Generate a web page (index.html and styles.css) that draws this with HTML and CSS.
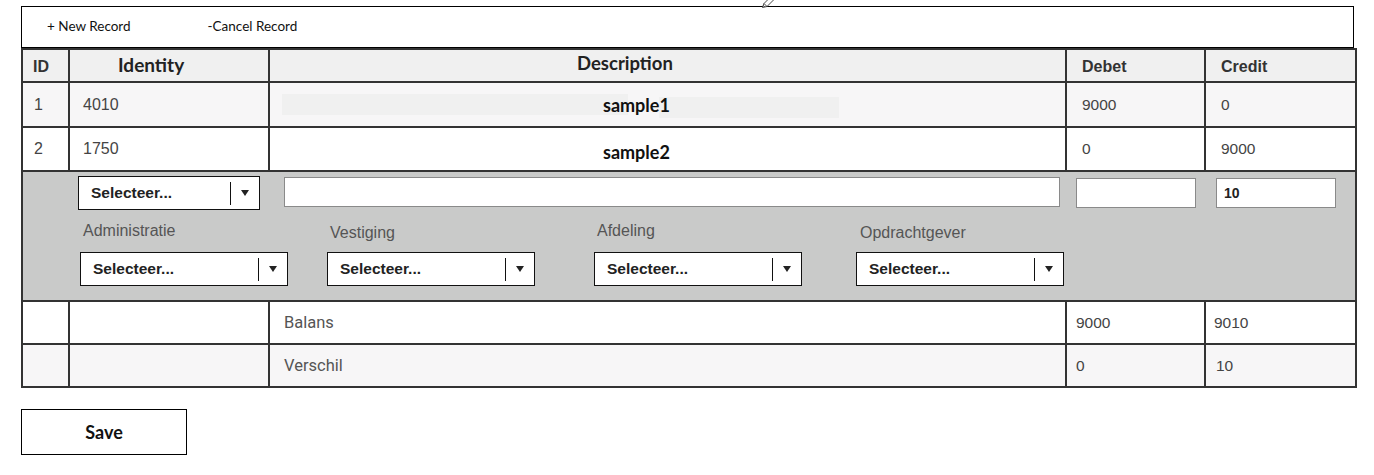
FILE: index.html
```html
<!DOCTYPE html>
<html>
<head>
<meta charset="utf-8">
<title>Records</title>
<link rel="stylesheet" href="styles.css">
</head>
<body>
<div class="page">
  <svg class="pencil" width="18" height="8" viewBox="0 0 18 8"><path d="M1.5 7.5 L3 3.5 L10 -3.5 L13 -0.5 L6 6.5 Z M3 3.5 L6 6.5 M2.3 5.5 L3.8 7" fill="#fff" stroke="#333" stroke-width="0.9"/></svg>
  <div class="toolbar">
    <span class="tool">+ New Record</span>
    <span class="tool cancel">-Cancel Record</span>
  </div>
  <table class="grid">
    <colgroup>
      <col class="c-id"><col class="c-ident"><col class="c-desc"><col class="c-debet"><col class="c-credit">
    </colgroup>
    <thead>
      <tr class="head">
        <th class="h-id">ID</th>
        <th class="h-ident">Identity</th>
        <th class="h-desc">Description</th>
        <th class="h-num">Debet</th>
        <th class="h-num">Credit</th>
      </tr>
    </thead>
    <tbody>
      <tr class="row r1 alt">
        <td class="id">1</td>
        <td class="ident">4010</td>
        <td class="desc"><span class="ghost g1"></span><span class="ghost g2"></span><span class="sample">sample1</span></td>
        <td class="num">9000</td>
        <td class="num">0</td>
      </tr>
      <tr class="row r2">
        <td class="id">2</td>
        <td class="ident">1750</td>
        <td class="desc"><span class="sample s2">sample2</span></td>
        <td class="num">0</td>
        <td class="num">9000</td>
      </tr>
      <tr class="editor">
        <td colspan="5">
          <div class="edit-line">
            <div class="select sel-main"><span class="sel-text">Selecteer...</span><span class="sel-sep"></span><span class="sel-arrow"></span></div>
            <div class="input in-desc"></div>
            <div class="input in-debet"></div>
            <div class="input in-credit">10</div>
          </div>
          <div class="dims">
            <div class="dim d1">
              <div class="dim-label">Administratie</div>
              <div class="select sel-dim"><span class="sel-text">Selecteer...</span><span class="sel-sep"></span><span class="sel-arrow"></span></div>
            </div>
            <div class="dim d2">
              <div class="dim-label">Vestiging</div>
              <div class="select sel-dim"><span class="sel-text">Selecteer...</span><span class="sel-sep"></span><span class="sel-arrow"></span></div>
            </div>
            <div class="dim d3">
              <div class="dim-label">Afdeling</div>
              <div class="select sel-dim"><span class="sel-text">Selecteer...</span><span class="sel-sep"></span><span class="sel-arrow"></span></div>
            </div>
            <div class="dim d4">
              <div class="dim-label">Opdrachtgever</div>
              <div class="select sel-dim"><span class="sel-text">Selecteer...</span><span class="sel-sep"></span><span class="sel-arrow"></span></div>
            </div>
          </div>
        </td>
      </tr>
      <tr class="row r3">
        <td></td>
        <td></td>
        <td class="label">Balans</td>
        <td class="num sum">9000</td>
        <td class="num sum2">9010</td>
      </tr>
      <tr class="row r4 alt">
        <td></td>
        <td></td>
        <td class="label">Verschil</td>
        <td class="num sum">0</td>
        <td class="num sum3">10</td>
      </tr>
    </tbody>
  </table>
  <button class="save" type="button">Save</button>
</div>
</body>
</html>
```

FILE: styles.css
```css
html, body {
  margin: 0;
  padding: 0;
  background: #fff;
}

.page {
  position: relative;
  padding: 6px 0 0 21px;
  font-family: "Liberation Sans", Arial, sans-serif;
}

.pencil {
  position: absolute;
  left: 761px;
  top: 0;
}

.toolbar {
  box-sizing: border-box;
  width: 1333px;
  height: 42px;
  border: 1px solid #000;
  display: flex;
  align-items: center;
  padding-left: 25px;
  gap: 77px;
  font-family: Lato, "Open Sans", sans-serif;
  font-size: 13.5px;
  color: #111;
}

.tool {
  padding-bottom: 2px;
}

.grid {
  border-collapse: collapse;
  table-layout: fixed;
  width: 1334px;
  border: 2px solid #333;
}

.c-id { width: 47px; }
.c-ident { width: 200px; }
.c-desc { width: 797px; }
.c-debet { width: 139px; }
.c-credit { width: 151px; }

.grid th,
.grid td {
  border: 2px solid #333;
  padding: 0;
  text-align: left;
}

.head {
  height: 33px;
  background: #f0f0f0;
}

.head th {
  color: #222;
  font-weight: bold;
}

.h-id {
  font-size: 16px;
  padding-left: 10px !important;
  color: #333 !important;
  padding-top: 2px !important;
}

.h-ident {
  font-family: Lato, "Open Sans", sans-serif;
  font-size: 19px;
  padding-left: 48px !important;
  padding-bottom: 2px !important;
}

.h-desc {
  font-family: Lato, "Open Sans", sans-serif;
  font-size: 18.5px;
  padding-left: 307px !important;
  padding-bottom: 6px !important;
}

.h-num {
  font-size: 16px;
  padding-left: 15px !important;
  color: #333 !important;
  padding-top: 3px !important;
}

.row td {
  font-size: 15.5px;
  color: #444;
}

.row.alt {
  background: #f7f6f7;
}

.r1 { height: 45px; }
.r2 { height: 44px; }
.r3 { height: 43px; }
.r4 { height: 43px; }

.id {
  padding-left: 11px !important;
  font-size: 16px !important;
}

.ident {
  padding-left: 13px !important;
  font-size: 16px !important;
}

.desc {
  position: relative;
  padding-left: 333px !important;
}

.ghost {
  position: absolute;
  background: #f0f0f0;
}

.g1 {
  left: 12px;
  top: 11px;
  width: 346px;
  height: 21px;
}

.g2 {
  left: 389px;
  top: 14px;
  width: 180px;
  height: 21px;
}

.sample {
  position: relative;
  font-family: Lato, "Open Sans", sans-serif;
  font-weight: bold;
  font-size: 18px;
  color: #111;
}

.s2 {
  top: 3px;
}

.num {
  padding-left: 15px !important;
}

.sum {
  padding-left: 9px !important;
}

.sum2 {
  padding-left: 8px !important;
}

.sum3 {
  padding-left: 10px !important;
}

.label {
  padding-left: 14px !important;
  font-family: Roboto, "Liberation Sans", sans-serif;
  font-size: 16.5px !important;
  color: #555 !important;
}

.editor td {
  background: #c9cac9;
  height: 128px;
  vertical-align: top;
  padding: 0 0 0 55px;
}

.edit-line {
  display: flex;
  align-items: flex-start;
  padding-top: 4px;
}

.select {
  position: relative;
  box-sizing: border-box;
  height: 34px;
  background: #fff;
  border: 1px solid #111;
  display: flex;
  align-items: center;
}

.sel-main {
  width: 182px;
}

.sel-dim {
  width: 208px;
}

.sel-text {
  flex: 1;
  padding-left: 12px;
  font-size: 15.5px;
  font-weight: bold;
  color: #222;
}

.sel-sep {
  width: 1px;
  height: 23px;
  background: #111;
}

.sel-arrow {
  width: 28px;
  display: flex;
  justify-content: center;
}

.sel-arrow::before {
  content: "";
  border-left: 4px solid transparent;
  border-right: 4px solid transparent;
  border-top: 6px solid #222;
}

.input {
  box-sizing: border-box;
  height: 30px;
  background: #fff;
  border: 1px solid #8a8a8a;
  margin-top: 1px;
  font-size: 14px;
  font-weight: bold;
  color: #222;
  display: flex;
  align-items: center;
  padding-left: 7px;
}

.in-desc {
  width: 776px;
  margin-left: 24px;
}

.in-debet {
  width: 120px;
  margin-left: 16px;
  margin-top: 2px;
}

.in-credit {
  width: 120px;
  margin-left: 20px;
  margin-top: 2px;
}

.dims {
  display: flex;
  padding-left: 2px;
  margin-top: 9px;
}

.d1 { width: 247px; }
.d2 { width: 267px; }
.d3 { width: 262px; }
.d4 { width: 210px; }

.dim-label {
  font-size: 16px;
  color: #555;
  padding-left: 3px;
  height: 33px;
  line-height: 28px;
}

.d1 .dim-label,
.d3 .dim-label {
  line-height: 24px;
}

.d4 .dim-label {
  padding-left: 4px;
}

.save {
  display: block;
  box-sizing: border-box;
  width: 166px;
  height: 46px;
  margin-top: 21px;
  background: #fff;
  border: 1px solid #000;
  font-family: Lato, "Open Sans", sans-serif;
  font-weight: bold;
  font-size: 18px;
  color: #111;
  padding: 0;
}
```
